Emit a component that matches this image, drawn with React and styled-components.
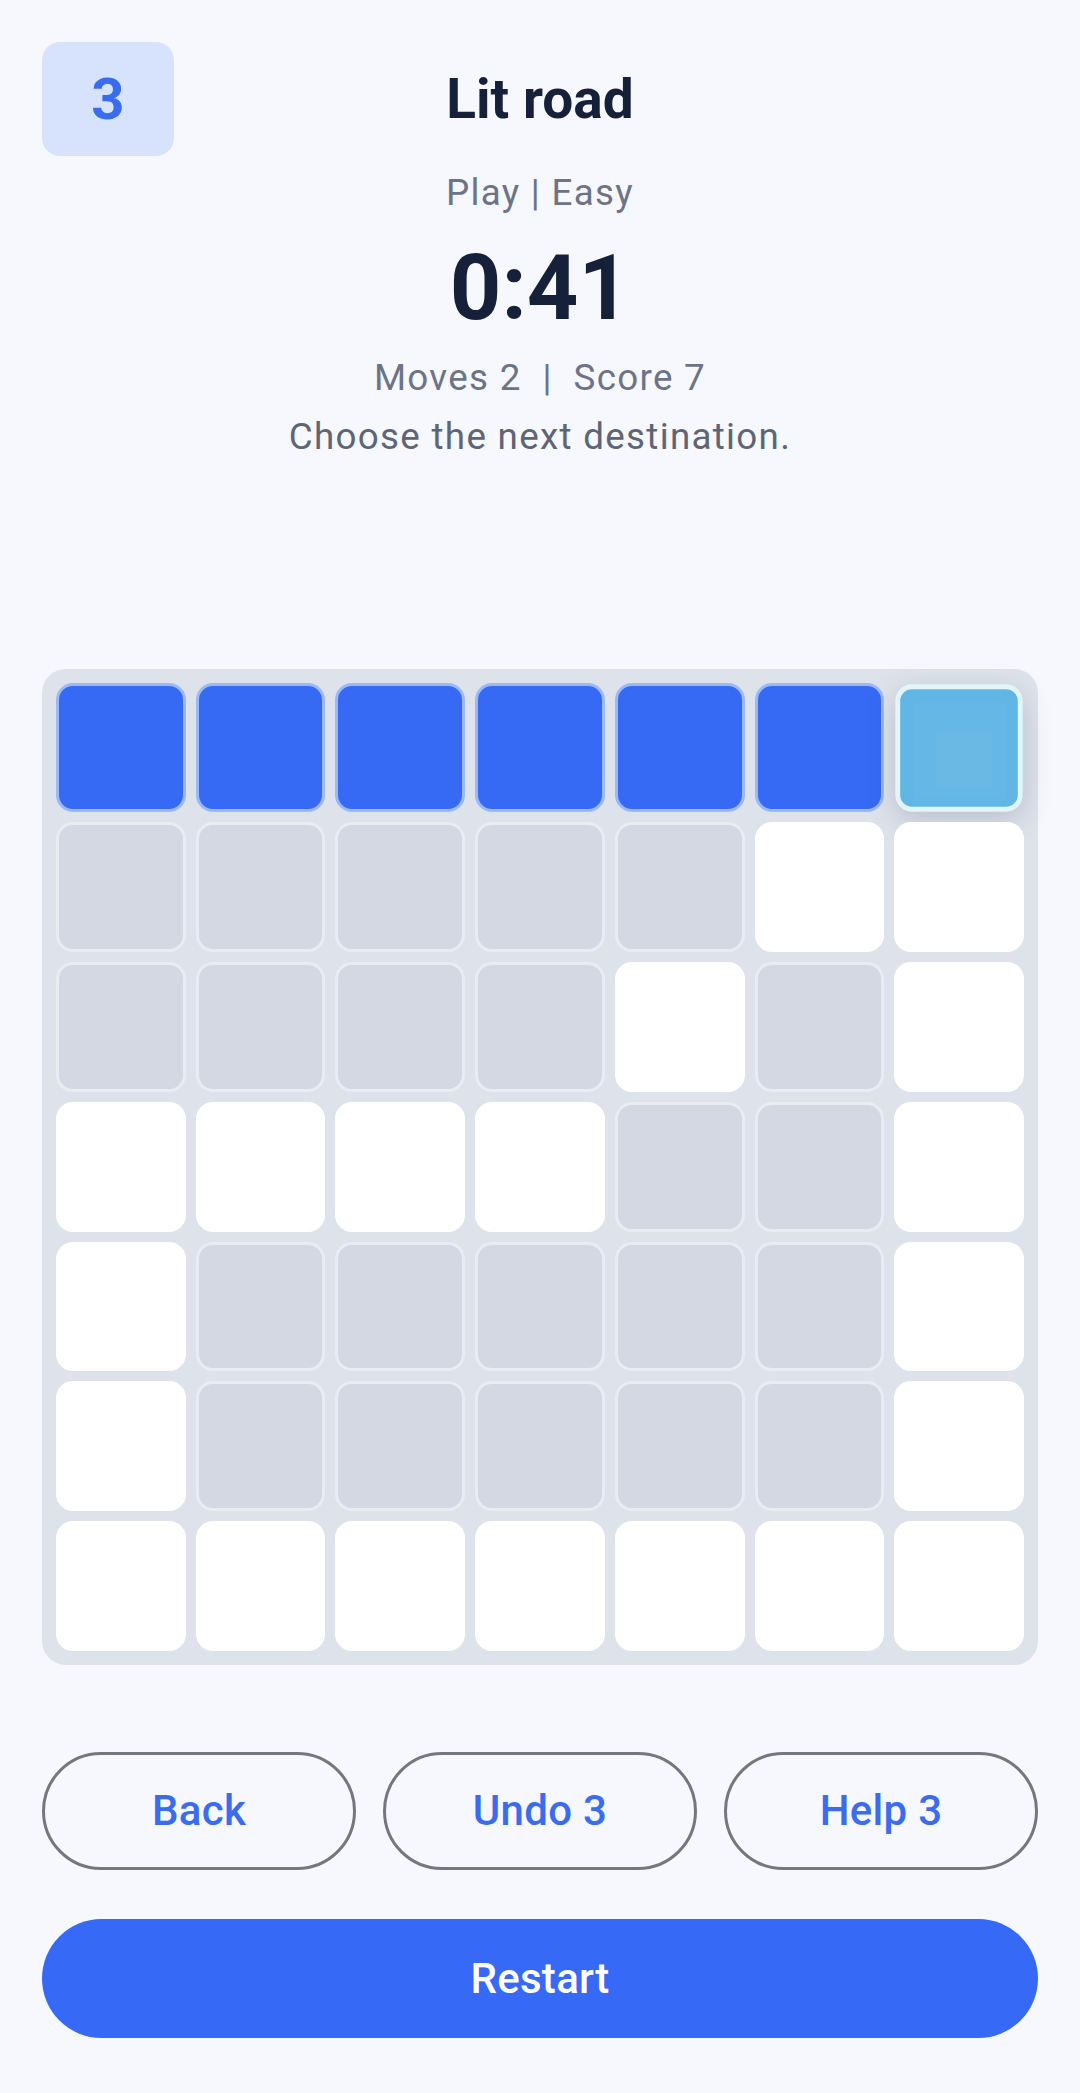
import React from "react";
import styled, { createGlobalStyle, css } from "styled-components";

const GlobalStyle = createGlobalStyle`
  html, body {
    margin: 0;
    padding: 0;
    background: #f6f8fd;
  }
  body {
    font-family: Roboto, "Liberation Sans", Arial, sans-serif;
    -webkit-font-smoothing: antialiased;
  }
  * { box-sizing: border-box; }
`;

const Page = styled.main`
  width: 1080px;
  min-height: 2093px;
  padding: 42px 42px 55px;
  display: flex;
  flex-direction: column;
  background: #f6f8fd;
`;

const Header = styled.header`
  display: grid;
  grid-template-columns: 132px 1fr 132px;
  align-items: center;
`;

const Badge = styled.div`
  width: 132px;
  height: 114px;
  border-radius: 18px;
  background: #d7e3fc;
  color: #3a6cf0;
  font-size: 58px;
  font-weight: 700;
  display: flex;
  align-items: center;
  justify-content: center;
  line-height: 1;
`;

const Title = styled.h1`
  margin: 0;
  text-align: center;
  font-size: 55px;
  font-weight: 700;
  color: #172039;
  line-height: 1.172;
`;

const Mode = styled.div`
  margin-top: 15px;
  text-align: center;
  font-size: 36.75px;
  letter-spacing: 1.3px;
  color: #6c7486;
  line-height: 1.172;
`;

const Timer = styled.div`
  margin-top: 22px;
  text-align: center;
  font-size: 90px;
  font-weight: 700;
  color: #172039;
  line-height: 1.172;
`;

const InfoLine = styled.div`
  margin-top: ${(p) => p.$gap}px;
  text-align: center;
  font-size: 36.75px;
  letter-spacing: 1.3px;
  white-space: pre;
  color: ${(p) => p.$color};
  line-height: 1.172;
`;

const Board = styled.section`
  margin-top: 211px;
  width: 100%;
  aspect-ratio: 1 / 1;
  padding: 14px;
  border-radius: 24px;
  background: #dee3eb;
  display: grid;
  grid-template-columns: repeat(7, 1fr);
  grid-template-rows: repeat(7, 1fr);
  gap: 10px;
`;

const cellKinds = {
  lit: css`
    background: #366af5;
    border: 3px solid #9bb8f7;
  `,
  off: css`
    background: #d4d8e2;
    border: 3px solid #e9ecf1;
  `,
  open: css`
    background: #ffffff;
    border: 3px solid #ffffff;
  `,
  current: css`
    background: #62b6e5;
    border: 5px solid #e1f5fb;
    box-shadow: 0 8px 30px rgba(40, 50, 80, 0.2);
    transform: scale(0.98);
    &::before {
      content: "";
      position: absolute;
      inset: 14px 12px 8px 14px;
      background: rgba(255, 255, 255, 0.025);
    }
    &::after {
      content: "";
      position: absolute;
      left: 36px;
      top: 44px;
      width: 58px;
      height: 56px;
      background: rgba(255, 255, 255, 0.035);
    }
  `,
};

const Cell = styled.div`
  position: relative;
  border-radius: 17px;
  ${(p) => cellKinds[p.$kind]}
`;

const ButtonRow = styled.div`
  margin-top: 87px;
  display: grid;
  grid-template-columns: repeat(3, 1fr);
  gap: 27px;
`;

const OutlineButton = styled.button`
  height: 118px;
  border-radius: 59px;
  border: 3px solid #79757f;
  background: transparent;
  color: #3a6cf0;
  font-family: Roboto, "Liberation Sans", Arial, sans-serif;
  font-size: 42px;
  font-weight: 500;
  letter-spacing: 0.3px;
  cursor: pointer;
`;

const PrimaryButton = styled.button`
  margin-top: 49px;
  height: 119px;
  width: 100%;
  border-radius: 60px;
  border: none;
  background: #3669f5;
  color: #ffffff;
  font-family: Roboto, "Liberation Sans", Arial, sans-serif;
  font-size: 42px;
  font-weight: 500;
  letter-spacing: 0.3px;
  cursor: pointer;
`;

const layout = [
  "LLLLLLC",
  "GGGGGWW",
  "GGGGWGW",
  "WWWWGGW",
  "WGGGGGW",
  "WGGGGGW",
  "WWWWWWW",
];

const kindOf = { L: "lit", C: "current", G: "off", W: "open" };

export default function App() {
  return (
    <>
      <GlobalStyle />
      <Page>
        <Header>
          <Badge>3</Badge>
          <Title>Lit road</Title>
          <div />
        </Header>
        <Mode>Play | Easy</Mode>
        <Timer>0:41</Timer>
        <InfoLine $gap={14} $color="#6c7486">{"Moves 2  |  Score 7"}</InfoLine>
        <InfoLine $gap={16} $color="#5d6577">Choose the next destination.</InfoLine>
        <Board>
          {layout.flatMap((row, r) =>
            row.split("").map((ch, c) => <Cell key={`${r}-${c}`} $kind={kindOf[ch]} />)
          )}
        </Board>
        <ButtonRow>
          <OutlineButton>Back</OutlineButton>
          <OutlineButton>Undo 3</OutlineButton>
          <OutlineButton>Help 3</OutlineButton>
        </ButtonRow>
        <PrimaryButton>Restart</PrimaryButton>
      </Page>
    </>
  );
}
